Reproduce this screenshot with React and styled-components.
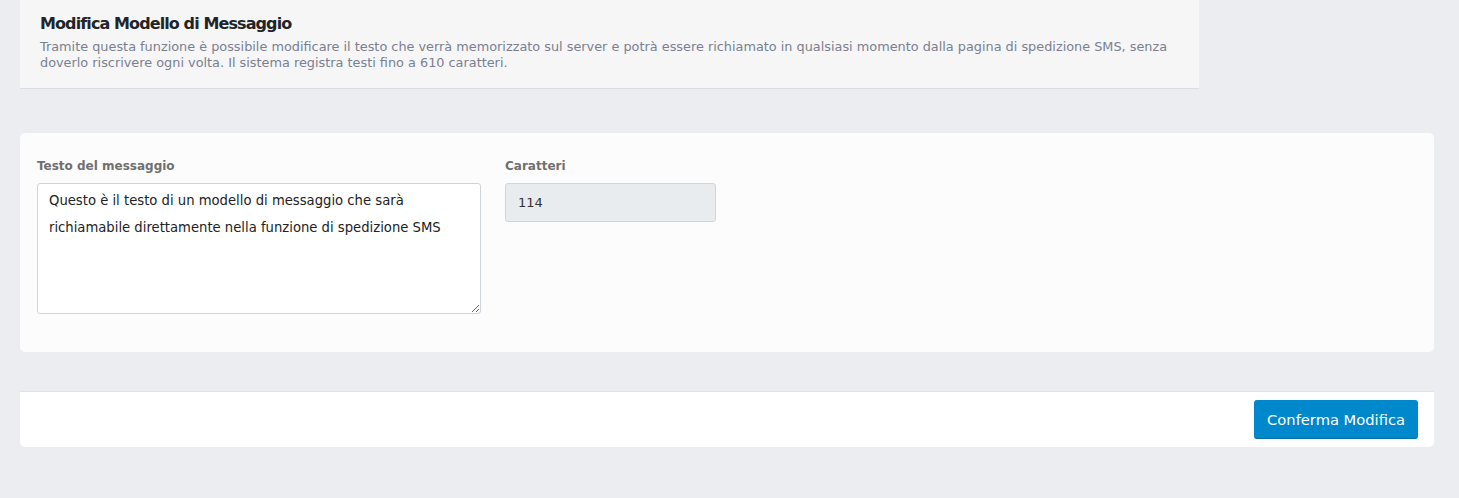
import React from "react";
import styled, { createGlobalStyle } from "styled-components";

const Global = createGlobalStyle`
  html, body { margin: 0; padding: 0; background: #ecedf1; }
  body { font-family: "DejaVu Sans", "Noto Sans", sans-serif; }
`;

const Page = styled.div`
  padding: 0 25px 0 20px;
  min-height: 498px;
  box-sizing: border-box;
`;

const Header = styled.header`
  width: 1179px;
  box-sizing: border-box;
  background: #f6f6f6;
  border-bottom: 1px solid #dadde2;
  padding: 12px 20px 17px 20px;
`;

const Title = styled.h2`
  margin: 0;
  font-size: 16px;
  font-weight: 700;
  color: #212529;
  letter-spacing: -0.9px;
  line-height: 24px;
`;

const Desc = styled.p`
  margin: 3px 0 0;
  font-size: 12.85px;
  line-height: 16px;
  color: #7a8091;
`;

const Card = styled.section`
  margin-top: 44px;
  background: #fcfcfc;
  border-radius: 5px;
  padding: 24px 17px 38px;
  display: flex;
  gap: 24px;
`;

const Field = styled.div`
  display: flex;
  flex-direction: column;
  width: ${(p) => p.$w}px;
`;

const Label = styled.label`
  font-size: 12px;
  font-weight: 700;
  color: #707070;
  line-height: 18px;
  margin-bottom: 8px;
`;

const TextArea = styled.textarea`
  box-sizing: border-box;
  height: 131px;
  width: 100%;
  border: 1px solid #ced4da;
  border-radius: 3px;
  background: #fff;
  font-family: inherit;
  font-size: 13.2px;
  line-height: 27px;
  color: #222;
  padding: 3px 11px;
  resize: vertical;
  outline: none;
`;

const ReadOnly = styled.div`
  box-sizing: border-box;
  height: 39px;
  border: 1px solid #d2d6da;
  border-radius: 3px;
  background: #e9ecef;
  font-size: 13px;
  color: #333;
  padding: 0 12px;
  display: flex;
  align-items: center;
`;

const Footer = styled.footer`
  margin-top: 39px;
  background: #fff;
  border-top: 1px solid #e1e3e7;
  border-radius: 0 0 5px 5px;
  padding: 8px 16px 8px;
  display: flex;
  justify-content: flex-end;
`;

const Button = styled.button`
  background: #0088cc;
  color: #fff;
  border: none;
  border-bottom: 1px solid #0670a6;
  border-radius: 3px;
  height: 39px;
  padding: 0 13px;
  font-family: inherit;
  font-size: 14.7px;
  cursor: pointer;
`;

export default function App() {
  return (
    <>
      <Global />
      <Page>
        <Header>
          <Title>Modifica Modello di Messaggio</Title>
          <Desc>
            Tramite questa funzione è possibile modificare il testo che verrà memorizzato sul server e potrà essere richiamato in qualsiasi momento dalla pagina di spedizione SMS, senza doverlo riscrivere ogni volta. Il sistema registra testi fino a 610 caratteri.
          </Desc>
        </Header>
        <Card>
          <Field $w={444}>
            <Label>Testo del messaggio</Label>
            <TextArea defaultValue="Questo è il testo di un modello di messaggio che sarà richiamabile direttamente nella funzione di spedizione SMS" />
          </Field>
          <Field $w={211}>
            <Label>Caratteri</Label>
            <ReadOnly>114</ReadOnly>
          </Field>
        </Card>
        <Footer>
          <Button>Conferma Modifica</Button>
        </Footer>
      </Page>
    </>
  );
}
